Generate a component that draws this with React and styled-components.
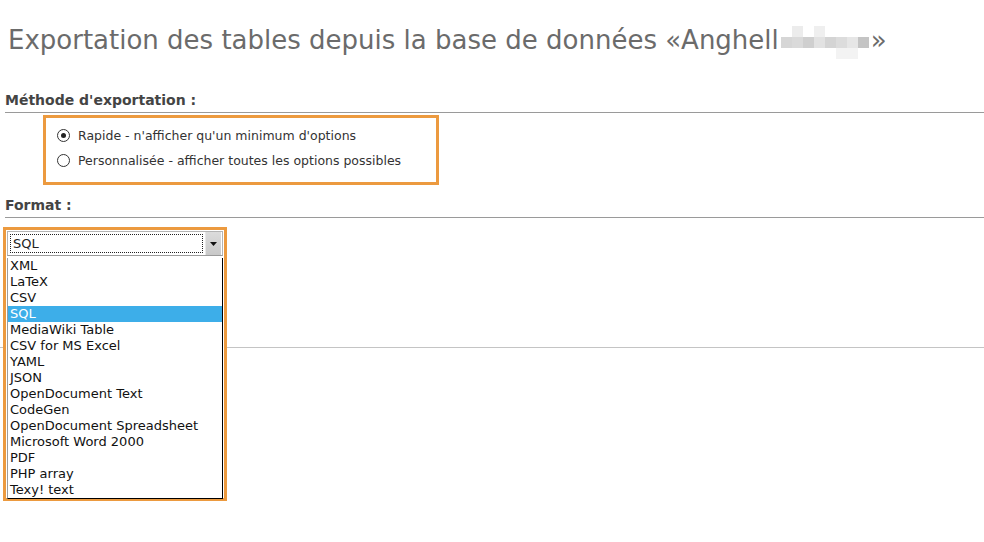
import styled, { createGlobalStyle } from "styled-components";

const GlobalStyle = createGlobalStyle`
  html, body {
    margin: 0;
    padding: 0;
    background: #fff;
  }
  body {
    font-family: "DejaVu Sans", Verdana, sans-serif;
    color: #333;
  }
`;

const Page = styled.div`
  width: 984px;
  min-height: 542px;
  overflow: hidden;
`;

const Title = styled.h1`
  margin: 0 0 27px 0;
  padding: 15px 0 0 8px;
  height: 50px;
  font-size: 26px;
  font-weight: normal;
  line-height: 34px;
  color: #6b6b6b;
  white-space: nowrap;
  display: flex;
  align-items: center;
`;

const Blur = styled.span`
  display: inline-grid;
  grid-template-columns: repeat(8, 11px);
  grid-auto-rows: 11px;
  margin: 0 2px 0 2px;
  transform: translateY(2px);
`;

const Pixel = styled.span`
  background: ${(p) => p.$c};
`;

const SectionHead = styled.h2`
  margin: 0 0 0 5px;
  padding: 0 0 3px 0;
  font-size: 14px;
  font-weight: bold;
  color: #444;
  line-height: 17px;
  border-bottom: 1px solid #9a9a9a;
`;

const Highlight = styled.div`
  border: 3px solid #ec9a3f;
  box-sizing: border-box;
`;

const MethodBox = styled(Highlight)`
  margin: 2px 0 0 43px;
  width: 396px;
  height: 70px;
  padding: 8px 0 0 11px;
  display: flex;
  flex-direction: column;
  gap: 6px;
`;

const Choice = styled.label`
  display: flex;
  align-items: center;
  gap: 8px;
  height: 19px;
  font-size: 12.5px;
  color: #333;
`;

const Radio = styled.span`
  width: 11px;
  height: 11px;
  border: 1px solid #333;
  border-radius: 50%;
  display: flex;
  align-items: center;
  justify-content: center;
  background: #fff;

  &::after {
    content: "";
    width: 5px;
    height: 5px;
    border-radius: 50%;
    background: ${(p) => (p.$checked ? "#222" : "transparent")};
  }
`;

const FormatSection = styled.section`
  margin-top: 12px;
`;

const FormatBody = styled.div`
  position: relative;
  height: 129px;
  border-bottom: 1px solid #c4c4c4;
`;

const Callout = styled(Highlight)`
  position: absolute;
  left: 3px;
  top: 9px;
  width: 224px;
  height: 274px;
  padding: 1px;
  background: #fff;
  z-index: 2;
`;

const SelectBox = styled.div`
  height: 25px;
  box-sizing: border-box;
  border: 1px solid #b4b4b4;
  border-bottom-color: #9a9a9a;
  background: #fff;
  display: flex;
  align-items: stretch;
  padding: 2px 1px 2px 2px;
`;

const SelectValue = styled.div`
  flex: 1;
  border: 1px dotted #222;
  font-size: 13px;
  line-height: 17px;
  padding-left: 2px;
  color: #222;
`;

const ArrowButton = styled.div`
  width: 15px;
  margin-left: 2px;
  margin-top: -2px;
  margin-bottom: -2px;
  background: linear-gradient(#dcdcdc, #c8c8c8);
  border-left: 1px solid #e8e8e8;
  display: flex;
  align-items: center;
  justify-content: center;
`;

const List = styled.ul`
  list-style: none;
  margin: 2px 0 0 0;
  padding: 0;
  border: 1px solid #000;
  border-left-color: #9c9c9c;
  border-top: none;
  background: #fff;
`;

const Item = styled.li`
  height: 16px;
  line-height: 16px;
  font-size: 13px;
  padding-left: 2px;
  white-space: nowrap;
  color: ${(p) => (p.$active ? "#fff" : "#111")};
  background: ${(p) => (p.$active ? "#3daee9" : "transparent")};
`;

const formats = [
  "XML",
  "LaTeX",
  "CSV",
  "SQL",
  "MediaWiki Table",
  "CSV for MS Excel",
  "YAML",
  "JSON",
  "OpenDocument Text",
  "CodeGen",
  "OpenDocument Spreadsheet",
  "Microsoft Word 2000",
  "PDF",
  "PHP array",
  "Texy! text",
];

const pixels = [
  "#fff", "#ececec", "#fff", "#efefef", "#fff", "#fff", "#fff", "#fff",
  "#d6d6d6", "#dadada", "#cfcfcf", "#e2e2e2", "#d4d4d4", "#dcdcdc", "#e6e6e6", "#c4c4c4",
  "#fff", "#fff", "#fff", "#fff", "#fff", "#f3f3f3", "#f3f3f3", "#fff",
];

const App = () => {
  return (
    <>
      <GlobalStyle />
      <Page>
        <Title>
          Exportation des tables depuis la base de données «Anghell
          <Blur>
            {pixels.map((c, i) => (
              <Pixel key={i} $c={c} />
            ))}
          </Blur>
          »
        </Title>

        <section>
          <SectionHead>Méthode d'exportation :</SectionHead>
          <MethodBox>
            <Choice>
              <Radio $checked />
              Rapide - n'afficher qu'un minimum d'options
            </Choice>
            <Choice>
              <Radio />
              Personnalisée - afficher toutes les options possibles
            </Choice>
          </MethodBox>
        </section>

        <FormatSection>
          <SectionHead>Format :</SectionHead>
          <FormatBody>
            <Callout>
              <SelectBox>
                <SelectValue>SQL</SelectValue>
                <ArrowButton>
                  <svg width="7" height="4" viewBox="0 0 7 4">
                    <path d="M0 0h7L3.5 4z" fill="#111" />
                  </svg>
                </ArrowButton>
              </SelectBox>
              <List>
                {formats.map((f) => (
                  <Item key={f} $active={f === "SQL"}>
                    {f}
                  </Item>
                ))}
              </List>
            </Callout>
          </FormatBody>
        </FormatSection>
      </Page>
    </>
  );
};

export default App;
